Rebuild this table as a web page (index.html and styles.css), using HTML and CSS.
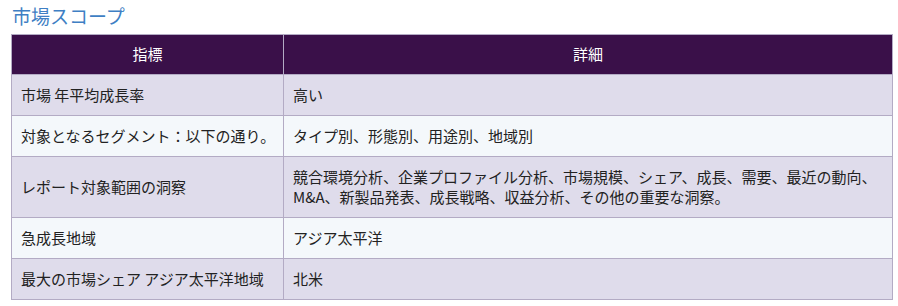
FILE: index.html
```html
<!DOCTYPE html>
<html lang="ja">
<head>
<meta charset="utf-8">
<link rel="stylesheet" href="styles.css">
</head>
<body>
<h2 class="title">市場スコープ</h2>
<table class="scope">
  <thead>
    <tr><th class="c1">指標</th><th>詳細</th></tr>
  </thead>
  <tbody>
    <tr class="odd"><td class="k">市場 年平均成長率</td><td>高い</td></tr>
    <tr class="even"><td class="k">対象となるセグメント：以下の通り。</td><td>タイプ別、形態別、用途別、地域別</td></tr>
    <tr class="odd"><td class="k">レポート対象範囲の洞察</td><td>競合環境分析、企業プロファイル分析、市場規模、シェア、成長、需要、最近の動向、M&amp;A、新製品発表、成長戦略、収益分析、その他の重要な洞察。</td></tr>
    <tr class="even"><td class="k">急成長地域</td><td>アジア太平洋</td></tr>
    <tr class="odd"><td class="k">最大の市場シェア アジア太平洋地域</td><td>北米</td></tr>
  </tbody>
</table>
</body>
</html>
```
FILE: styles.css
```css
body {
  margin: 0;
  padding: 4px 6px 0 11px;
  background: #ffffff;
  font-family: "Noto Sans CJK JP", "Noto Sans", sans-serif;
  color: #222222;
}
.title {
  margin: 0 0 6px 1px;
  font-size: 19px;
  font-weight: 400;
  line-height: 24px;
  color: #3f7fc4;
}
.scope {
  width: 882px;
  table-layout: fixed;
  border-collapse: collapse;
  font-size: 15px;
  line-height: 20px;
}
.scope th, .scope td {
  border: 1px solid #b3abc4;
  text-align: left;
  vertical-align: middle;
  padding: 10px 9px 10px 9px;
}
.scope th {
  background: #3a1049;
  color: #ffffff;
  font-weight: 400;
  text-align: center;
  padding: 9px 9px 10px;
  border-color: #b3abc4;
}
.scope .c1 { width: 253px; }
.scope .k { white-space: nowrap; }
.odd td { background: #dfdceb; }
.even td { background: #f4f8fb; }
```
